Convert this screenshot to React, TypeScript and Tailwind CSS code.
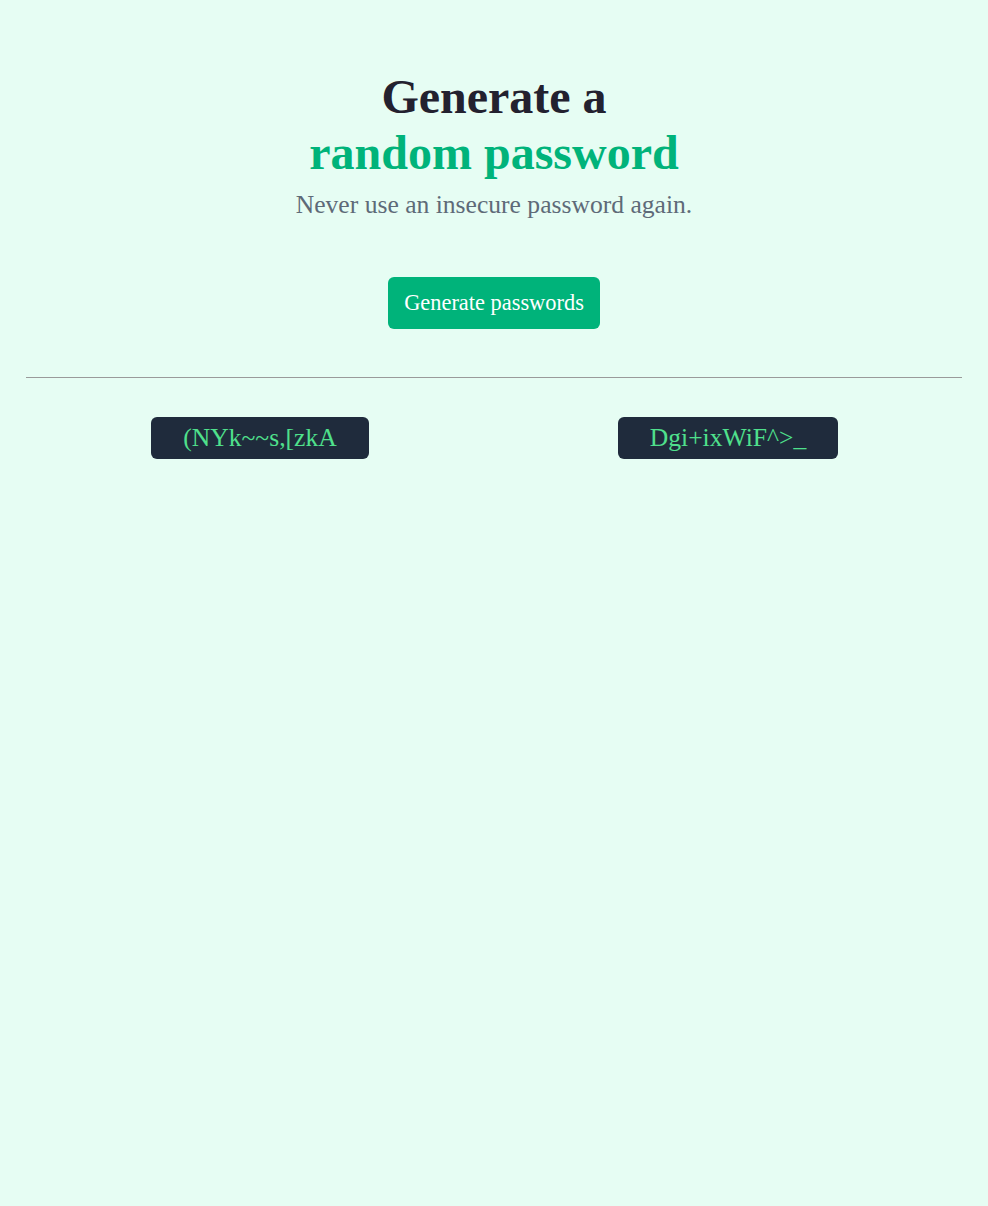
import React from 'react';

const passwords = ['(NYk~~s,[zkA', 'Dgi+ixWiF^>_'];

export default function App() {
  return (
    <div className="min-h-screen bg-[#e6fdf3] font-['Liberation_Serif','Times_New_Roman',serif]">
      <div className="px-[26px] pt-[69px]">
        <header className="text-center">
          <h1 className="text-[48px] leading-[56px] font-bold text-[#23212f]">
            Generate a
            <br />
            <span className="text-[#00b37a]">random password</span>
          </h1>
          <p className="mt-[9px] text-[25.6px] leading-[30px] text-[#5e6a78]">
            Never use an insecure password again.
          </p>
          <button className="mt-[57px] h-[52px] px-4 rounded-md bg-[#00b37a] text-white text-[22.4px]">
            Generate passwords
          </button>
        </header>

        <hr className="mt-[48px] border-0 border-t border-[#9a9a9a]" />

        <div className="grid grid-cols-2 mt-[39px]">
          {passwords.map((p) => (
            <div key={p} className="flex justify-center">
              <div className="h-[42px] px-8 flex items-center rounded-md bg-[#1f2b3c] text-[#4fe08c] text-[25.6px]">
                {p}
              </div>
            </div>
          ))}
        </div>
      </div>
    </div>
  );
}
